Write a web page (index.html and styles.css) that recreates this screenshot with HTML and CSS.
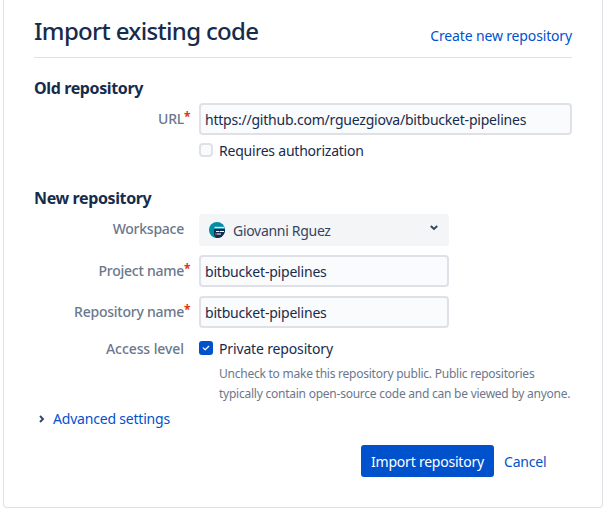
FILE: index.html
```
<!DOCTYPE html>
<html lang="en"><head><meta charset="utf-8"><title>Import existing code</title><link rel="stylesheet" href="styles.css"></head>
<body>
<main class="panel">
<header class="header"><h1>Import existing code</h1><a class="create">Create new repository</a></header>
<form>
<h2 class="old">Old repository</h2>
<div class="row url-row"><label class="label"><span>URL</span><i>*</i></label><div class="input wide"><span>https://github.com/rguezgiova/bitbucket-pipelines</span></div></div>
<div class="row auth-row"><span class="label"></span><label class="check"><span class="box"></span><span class="auth">Requires authorization</span></label></div>
<h2 class="new">New repository</h2>
<div class="row workspace-row"><label class="label plain"><span>Workspace</span></label><div class="select"><svg class="avatar" viewBox="0 0 16 16"><circle cx="8" cy="8" r="8" fill="#008da6"/><path d="M5 7h11v2a8 8 0 0 1-9 7l-2-3Z" fill="#152c50"/><path d="M5.5 5.5H15" stroke="#dff0ee" stroke-width="1.4"/><path d="M7 9.5h3M11 9.5h4M8 12h4" stroke="#fff" stroke-width="1"/><path d="M6 12h2M10 9.5h1" stroke="#e5695a"/></svg><span class="person">Giovanni Rguez</span><svg class="chevron" viewBox="0 0 10 8"><path d="m1.8 2 3.2 3 3.2-3" fill="none" stroke="#344563" stroke-width="2"/></svg></div></div>
<div class="row project-row"><label class="label"><span class="project">Project name</span><i>*</i></label><div class="input"><span>bitbucket-pipelines</span></div></div>
<div class="row repo-row"><label class="label"><span class="repo">Repository name</span><i>*</i></label><div class="input"><span>bitbucket-pipelines</span></div></div>
<div class="row access-row"><label class="label plain"><span class="access">Access level</span></label><label class="check"><svg class="checked" viewBox="0 0 14 14"><rect width="14" height="14" rx="3" fill="#0052cc"/><path d="m4.2 6.9 2 1.9 3.6-3.5" fill="none" stroke="#fff" stroke-width="1.2" stroke-linecap="round" stroke-linejoin="round"/></svg><span class="private">Private repository</span></label></div>
<p class="help"><span>Uncheck to make this repository public. Public repositories</span><br><span>typically contain open-source code and can be viewed by anyone.</span></p>
<a class="advanced"><svg viewBox="0 0 8 10"><path d="m2 2 3 3-3 3" fill="none" stroke="#344563" stroke-width="1.9"/></svg><span>Advanced settings</span></a>
<footer class="actions"><button type="button">Import repository</button><a>Cancel</a></footer>
</form></main></body></html>
```
FILE: styles.css
```
*{box-sizing:border-box}
body{margin:0;background:#fff;color:#172b4d;font:14px/20px "Noto Sans",sans-serif;overflow:hidden}
.panel{width:600px;height:508px;margin-left:3px;padding:0 30px;border:1px solid #dfe1e6;border-top:0;border-radius:0 0 4px 4px}
.header{height:58px;border-bottom:1px solid #dfe1e6;display:flex;justify-content:space-between}
h1{font-size:24px;line-height:28px;font-weight:500;letter-spacing:-.67px;margin:17px 0 0}
a{color:#0052cc}
.create{margin-top:26px;letter-spacing:-.15px}
h2{font-size:16px;line-height:20px;font-weight:700;letter-spacing:-.38px;margin:0}
.old{margin-top:20px}
.new{margin-top:27px}
.row{display:flex}
.label{width:165px;padding-right:9px;display:flex;justify-content:flex-end;align-items:center;color:#6b778c;font-weight:500;letter-spacing:-.25px;flex:none}
.label.plain{padding-right:15px}
.label i{width:6px;color:#de350b;font-style:normal;font-weight:700;font-size:12px;letter-spacing:0;margin-top:-4px}
.label .access{letter-spacing:-.08px}
.url-row{height:32px;margin-top:5px}
.input{width:250px;height:32px;border:2px solid #dfe1e6;border-radius:4px;background:#fafbfc;padding:4px;line-height:21px;letter-spacing:-.2px}
.wide{width:373px;letter-spacing:-.22px}
.auth-row{height:20px;margin-top:6px}
.check{display:flex;align-items:center;gap:6px}
.box{width:14px;height:14px;border:2px solid #dfe1e6;border-radius:4px;background:#fafbfc;margin-top:-2px}
.auth{letter-spacing:-.22px}
.workspace-row{height:32px;margin-top:6px}
.workspace-row .label{padding-bottom:2px}
.select{width:250px;background:#f4f5f7;border-radius:3px;display:flex;align-items:center;padding:0 10px;color:#344563}
.avatar{width:16px;height:16px;margin-right:8px}
.person{letter-spacing:-.3px;margin-top:1px}
.chevron{width:10px;height:8px;margin:-4px 0 0 auto}
.project-row,.repo-row{height:32px;margin-top:9px}
.access-row{height:20px;margin-top:11px}
.checked{width:14px;height:14px;margin-top:-2px}
.private{letter-spacing:-.15px}
.help{margin:5px 0 0 185px;color:#6b778c;font-size:12px;line-height:20px;letter-spacing:-.24px;white-space:nowrap}
.advanced{display:flex;align-items:center;height:20px;margin-top:5px;padding-left:4px;letter-spacing:-.2px}
.advanced svg{width:8px;height:10px;margin-right:7px}
.actions{display:flex;align-items:center;margin:16px 0 0 327px}
.actions button{width:133px;height:32px;border:0;border-radius:3px;background:#0052cc;color:#fff;font:400 14px/20px "Noto Sans",sans-serif;letter-spacing:-.22px;padding:1px 0 0}
.actions a{margin:1px 0 0 10px;letter-spacing:-.2px}
```
